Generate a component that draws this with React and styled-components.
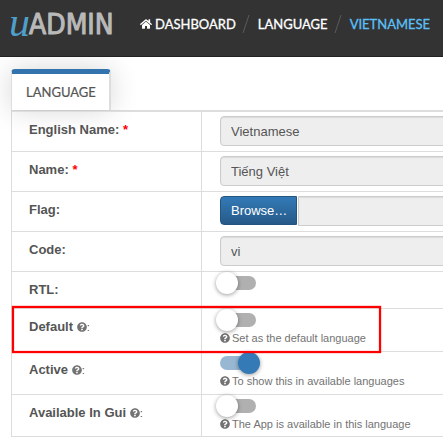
import React from "react";
import styled, { createGlobalStyle } from "styled-components";
import { FaHome, FaQuestionCircle } from "react-icons/fa";

const GlobalStyle = createGlobalStyle`
  * { box-sizing: border-box; }
  body {
    margin: 0;
    background: #fff;
    color: #555;
    font: 13px/20px "Liberation Sans", Arial, sans-serif;
    overflow-x: hidden;
  }
`;

const Header = styled.header`
  display: flex;
  align-items: center;
  height: 57px;
  padding: 0 9px 8px;
  background: #333;
  border-bottom: 1px solid #222;
`;

const Logo = styled.a`
  flex: none;
  width: 104px;
  height: 32px;
  margin-right: 27px;
`;

const LogoArt = styled.svg`
  display: block;
  overflow: visible;
  stroke-linejoin: round;
`;

const Crumbs = styled.nav`
  display: flex;
  align-items: center;
  font: 13px/20px Lato, sans-serif;
  white-space: nowrap;
`;

const Crumb = styled.a`
  display: flex;
  align-items: center;
  gap: 3px;
  color: ${(p) => (p.$current ? "#5bc0f8" : "#fff")};
  -webkit-text-stroke: 0.3px currentColor;
  text-decoration: none;
`;

const Divider = styled.svg`
  flex: none;
  width: 8px;
  height: 20px;
  margin: 0 8px 0 6px;
  stroke: #5a5a5a;
`;

const Main = styled.main`
  padding: 12px 0 10px 11px;
  overflow: hidden;
`;

const Tabs = styled.div`
  display: flex;
`;

const Tab = styled.button`
  height: 41px;
  padding: 0 13px 0 14px;
  border: 1px solid #ddd;
  border-top: 5px solid #3374af;
  border-right-width: 2px;
  border-bottom: 0;
  border-radius: 4px 4px 0 0;
  background: #fff;
  box-shadow: 0 0 28px rgba(0, 0, 0, 0.16);
  color: #555;
  font: 13px/20px Lato, sans-serif;
  -webkit-text-stroke: 0.2px currentColor;
`;

const Table = styled.table`
  width: 100%;
  min-width: 640px;
  table-layout: fixed;
  border-collapse: separate;
  border-spacing: 0;
  border-top: 1px solid #ddd;
  border-left: 1px solid #ddd;
`;

const Row = styled.tr`
  position: relative;
  height: ${(p) => p.$height}px;
`;

const HeadCell = styled.th`
  width: 189px;
  padding: 8px 0 0 17px;
  border-top: 1px solid #ddd;
  text-align: left;
  vertical-align: top;
  line-height: 20px;
  tr:last-child > & { border-bottom: 1px solid #ddd; }
`;

const ValueCell = styled.td`
  padding: 4px 18px 0;
  border-top: 1px solid #ddd;
  border-left: 1px solid #ddd;
  vertical-align: top;
  tr:last-child > & { border-bottom: 1px solid #ddd; }
`;

const Required = styled.span`
  color: #f00;
`;

const HelpIcon = styled(FaQuestionCircle)`
  flex: none;
  width: 10px;
  height: 10px;
  color: #737373;
  vertical-align: -1px;
`;

const Colon = styled.span`
  font-size: 11px;
  font-weight: 400;
`;

const TextBox = styled.input`
  display: block;
  width: 100%;
  height: 30px;
  padding: 0 10px;
  border: 1px solid #ccc;
  border-radius: ${(p) => (p.$joined ? "0 4px 4px 0" : "4px")};
  background: #eee;
  box-shadow: inset 0 1px 1px rgba(0, 0, 0, 0.08);
  color: #555;
  font: inherit;
`;

const FileGroup = styled.div`
  display: flex;
  gap: 1px;
`;

const Browse = styled.button`
  flex: none;
  height: 29px;
  padding: 0 9px 0 10px;
  border: 1px solid #245580;
  border-radius: 4px 0 0 4px;
  background: linear-gradient(#337ab7, #265a88);
  color: #fff;
  font: inherit;
`;

const Switch = styled.input`
  appearance: none;
  position: relative;
  display: block;
  width: 36px;
  height: 14px;
  margin: 0;
  border-radius: 7px;
  background: #b0b0b0;
  &::before {
    content: "";
    position: absolute;
    top: -4px;
    left: -4px;
    width: 22px;
    height: 22px;
    border-radius: 50%;
    background: #fff;
    box-shadow: 0 1px 4px rgba(0, 0, 0, 0.4);
  }
  &:checked { background: #98b7d3; }
  &:checked::before {
    left: 18px;
    background: #337ab7;
  }
`;

const Hint = styled.p`
  display: flex;
  align-items: center;
  gap: 2px;
  margin: 3px 0 0;
  color: #737373;
  font-size: 11px;
  line-height: 16px;
  white-space: nowrap;
`;

const Highlight = styled.span`
  position: absolute;
  top: -2px;
  bottom: -2px;
  left: 0;
  width: 369px;
  border: 2px solid #f00;
  box-shadow: 0 0 1px #f00, inset 0 0 1px #f00;
  pointer-events: none;
  z-index: 1;
`;

const fields = [
  { id: "english", label: "English Name", required: true, value: "Vietnamese" },
  { id: "name", label: "Name", required: true, value: "Tiếng Việt" },
  { id: "flag", label: "Flag", file: true, value: "" },
  { id: "code", label: "Code", value: "vi" },
  { id: "rtl", label: "RTL", toggle: true },
  { id: "default", label: "Default", toggle: true, hint: "Set as the default language", highlight: true },
  { id: "active", label: "Active", toggle: true, on: true, hint: "To show this in available languages" },
  { id: "gui", label: "Available In Gui", toggle: true, hint: "The App is available in this language" },
];

function rowHeight(field) {
  if (field.hint) return 43;
  return field.toggle ? 37 : 40;
}

function Value({ field }) {
  if (field.toggle) {
    return (
      <>
        <Switch type="checkbox" id={field.id} defaultChecked={field.on} />
        {field.hint && <Hint><HelpIcon />{field.hint}</Hint>}
      </>
    );
  }
  if (field.file) {
    return (
      <FileGroup>
        <Browse type="button">Browse…</Browse>
        <TextBox id={field.id} $joined readOnly defaultValue="" />
      </FileGroup>
    );
  }
  return <TextBox id={field.id} readOnly defaultValue={field.value} />;
}

function Field({ field }) {
  return (
    <Row $height={rowHeight(field)}>
      <HeadCell scope="row">
        <label htmlFor={field.id}>
          {field.label}
          {field.hint ? <> <HelpIcon /><Colon>:</Colon></> : ":"}
          {field.required && <Required> *</Required>}
        </label>
        {field.highlight && <Highlight />}
      </HeadCell>
      <ValueCell>
        <Value field={field} />
      </ValueCell>
    </Row>
  );
}

function Slash() {
  return (
    <Divider viewBox="0 0 8 20" aria-hidden="true">
      <path d="M1 19 7 1" />
    </Divider>
  );
}

export default function App() {
  return (
    <>
      <GlobalStyle />
      <Header>
        <Logo href="#" aria-label="uAdmin">
          <LogoArt width="104" height="32" viewBox="0 0 104 32">
            <text x="0" y="28" fontFamily="Liberation Serif, serif" fontStyle="italic" fontSize="42" fill="#4f9fcb">u</text>
            <text x="20" y="26" fontFamily="Liberation Sans Narrow, DejaVu Sans Condensed, sans-serif" fontSize="28" fill="#b9b9b9" stroke="#b9b9b9" strokeWidth="1">ADMIN</text>
          </LogoArt>
        </Logo>
        <Crumbs aria-label="Breadcrumb">
          <Crumb href="#"><FaHome size={12} />DASHBOARD</Crumb>
          <Slash />
          <Crumb href="#">LANGUAGE</Crumb>
          <Slash />
          <Crumb href="#" $current aria-current="page">VIETNAMESE</Crumb>
        </Crumbs>
      </Header>
      <Main>
        <Tabs role="tablist">
          <Tab type="button" role="tab" aria-selected="true">LANGUAGE</Tab>
        </Tabs>
        <Table>
          <tbody>
            {fields.map((field) => <Field key={field.id} field={field} />)}
          </tbody>
        </Table>
      </Main>
    </>
  );
}
